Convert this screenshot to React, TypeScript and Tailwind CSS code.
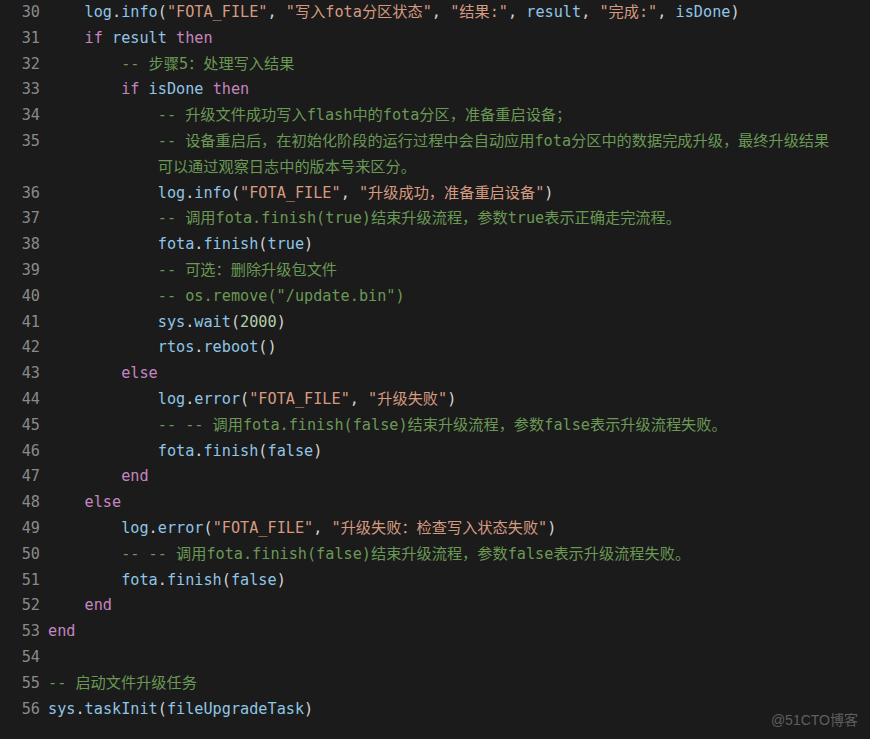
import React from "react";

type Tok = { t: string; c: string };

const KEYWORDS = new Set(["if", "then", "else", "end"]);
const CONSTS = new Set(["true", "false", "nil"]);

const COLOR: Record<string, string> = {
  kw: "text-[#c586c0]",
  id: "text-[#8fc5e6]",
  str: "text-[#d59a80]",
  com: "text-[#6a9955]",
  num: "text-[#b5cea8]",
  con: "text-[#8fc5e6]",
  p: "text-[#d4d4d4]",
};

function tokenize(src: string): Tok[] {
  const out: Tok[] = [];
  const m = src.match(/^(\s*)(.*)$/);
  const indent = m ? m[1] : "";
  const rest = m ? m[2] : src;
  if (indent) out.push({ t: indent, c: "p" });
  if (rest.startsWith("--")) {
    out.push({ t: rest, c: "com" });
    return out;
  }
  const re = /("[^"]*")|([A-Za-z_][A-Za-z0-9_]*)|(\d+)|(\s+)|(.)/g;
  let r: RegExpExecArray | null;
  while ((r = re.exec(rest))) {
    if (r[1]) out.push({ t: r[1], c: "str" });
    else if (r[2]) {
      const w = r[2];
      out.push({ t: w, c: KEYWORDS.has(w) ? "kw" : CONSTS.has(w) ? "con" : "id" });
    } else if (r[3]) out.push({ t: r[3], c: "num" });
    else out.push({ t: r[0], c: "p" });
  }
  return out;
}

const I1 = "    ";
const I2 = "        ";
const I3 = "            ";

const LINES: { n?: number; text: string; comment?: boolean }[] = [
  { n: 30, text: I1 + 'log.info("FOTA_FILE", "写入fota分区状态", "结果:", result, "完成:", isDone)' },
  { n: 31, text: I1 + "if result then" },
  { n: 32, text: I2 + "-- 步骤5：处理写入结果" },
  { n: 33, text: I2 + "if isDone then" },
  { n: 34, text: I3 + "-- 升级文件成功写入flash中的fota分区，准备重启设备；" },
  { n: 35, text: I3 + "-- 设备重启后，在初始化阶段的运行过程中会自动应用fota分区中的数据完成升级，最终升级结果" },
  { text: I3 + "可以通过观察日志中的版本号来区分。", comment: true },
  { n: 36, text: I3 + 'log.info("FOTA_FILE", "升级成功，准备重启设备")' },
  { n: 37, text: I3 + "-- 调用fota.finish(true)结束升级流程，参数true表示正确走完流程。" },
  { n: 38, text: I3 + "fota.finish(true)" },
  { n: 39, text: I3 + "-- 可选：删除升级包文件" },
  { n: 40, text: I3 + '-- os.remove("/update.bin")' },
  { n: 41, text: I3 + "sys.wait(2000)" },
  { n: 42, text: I3 + "rtos.reboot()" },
  { n: 43, text: I2 + "else" },
  { n: 44, text: I3 + 'log.error("FOTA_FILE", "升级失败")' },
  { n: 45, text: I3 + "-- -- 调用fota.finish(false)结束升级流程，参数false表示升级流程失败。" },
  { n: 46, text: I3 + "fota.finish(false)" },
  { n: 47, text: I2 + "end" },
  { n: 48, text: I1 + "else" },
  { n: 49, text: I2 + 'log.error("FOTA_FILE", "升级失败：检查写入状态失败")' },
  { n: 50, text: I2 + "-- -- 调用fota.finish(false)结束升级流程，参数false表示升级流程失败。" },
  { n: 51, text: I2 + "fota.finish(false)" },
  { n: 52, text: I1 + "end" },
  { n: 53, text: "end" },
  { n: 54, text: "" },
  { n: 55, text: "-- 启动文件升级任务" },
  { n: 56, text: "sys.taskInit(fileUpgradeTask)" },
];

export default function App() {
  return (
    <div className="relative min-h-screen w-full overflow-hidden bg-[#1b1b1b]">
      <div
        className="flex flex-col text-[15.2px]"
        style={{ fontFamily: '"DejaVu Sans Mono", "Noto Sans CJK SC", monospace' }}
      >
        {LINES.map((line, i) => {
          const toks = line.comment ? [{ t: line.text, c: "com" }] : tokenize(line.text);
          return (
            <div key={i} className="flex h-[25.8px] items-center leading-[25.8px]">
              <div className="w-[40px] shrink-0 text-right text-[#8a8a8a]">{line.n ?? ""}</div>
              <div className="whitespace-pre pl-[8px]">
                {toks.map((tk, j) => (
                  <span key={j} className={COLOR[tk.c]}>
                    {tk.t}
                  </span>
                ))}
              </div>
            </div>
          );
        })}
      </div>
      <div
        className="absolute bottom-[8px] right-[12px] text-[14px] text-[#5f5f5f]"
        style={{ fontFamily: '"Liberation Sans", "Noto Sans CJK SC", sans-serif' }}
      >
        @51CTO博客
      </div>
    </div>
  );
}
